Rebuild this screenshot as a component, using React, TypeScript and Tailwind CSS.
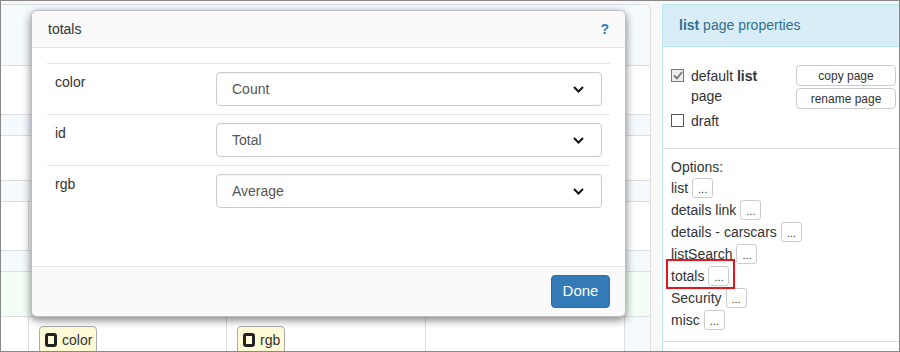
import React from "react";

const font = "font-['Liberation_Sans',Arial,sans-serif]";

function Chevron() {
  return (
    <svg width="11" height="7" viewBox="0 0 11 7" className="shrink-0">
      <polyline points="1,1 5.5,5.5 10,1" fill="none" stroke="#111" strokeWidth="2" />
    </svg>
  );
}

function FieldRow({ label, value }: { label: string; value: string }) {
  return (
    <div className="flex border-t border-[#e5e5e5] pt-[8px] pb-[8px]">
      <div className="w-[169px] pl-2 text-[14px] leading-[20px] text-[#333]">{label}</div>
      <div className="flex-1 mr-2 h-[34px] rounded-[4px] border border-[#ccc] bg-white flex items-center justify-between pl-[15px] pr-[17px] text-[14px] text-[#555] shadow-[inset_0_1px_1px_rgba(0,0,0,0.04)]">
        <span>{value}</span>
        <Chevron />
      </div>
    </div>
  );
}

function Chip({ label }: { label: string }) {
  return (
    <div className="inline-flex items-center gap-[5px] h-[28px] pl-[5px] pr-[4px] rounded-[4px] border border-[#aaa] bg-[#fffbd6] text-[14px] text-[#333]">
      <span className="w-[12px] h-[14px] rounded-[3px] border-[3px] border-[#222]" />
      {label}
    </div>
  );
}

function OptionLine({ label }: { label: string }) {
  return (
    <div className="flex items-center h-[22px] gap-[4px]">
      <span>{label}</span>
      <span className="w-[21px] h-[20px] rounded-[3px] border border-[#ccc] bg-white flex items-center justify-center text-[11px] leading-none text-[#333] pt-[2px]">
        ...
      </span>
    </div>
  );
}

export default function App() {
  const options = ["list", "details link", "details - carscars", "listSearch", "totals", "Security", "misc"];

  return (
    <div className={`relative w-[900px] h-[352px] overflow-hidden border border-[#888] bg-[#f8f8f8] ${font}`}>
      <div className="flex h-full pt-[3px]">
        {/* left page grid */}
        <div className="w-[650px] h-full flex flex-col bg-white border-t border-r border-[#ddd] rounded-tr-[6px] overflow-hidden">
          <div className="shrink-0 h-[61px] bg-[#f5faff] border-b border-[#ddd]" />
          <div className="shrink-0 h-[49px] border-b border-[#ddd]" />
          <div className="shrink-0 h-[21px] bg-[#f5faff] border-b border-[#ddd]" />
          <div className="shrink-0 h-[45px] border-b border-[#ddd]" />
          <div className="shrink-0 h-[21px] bg-[#f5faff] border-b border-[#ddd]" />
          <div className="shrink-0 h-[49px] border-b border-[#ddd] flex">
            <div className="w-[28px] border-r border-[#ddd]" />
          </div>
          <div className="shrink-0 h-[21px] bg-[#f5faff] border-b border-[#ddd]" />
          <div className="shrink-0 h-[45px] bg-[#f3fff6] border-b border-[#ddd]" />
          <div className="flex-1 min-h-0 flex">
            <div className="w-[28px] border-r border-[#ddd]" />
            <div className="w-[198px] border-r border-[#ddd] pl-[10px] pt-[9px]">
              <Chip label="color" />
            </div>
            <div className="w-[199px] border-r border-[#ddd] pl-[10px] pt-[9px]">
              <Chip label="rgb" />
            </div>
            <div className="w-[199px] border-r border-[#ddd]" />
            <div className="flex-1 bg-[#f5faff]" />
          </div>
        </div>

        <div className="w-[11px]" />

        {/* right properties panel */}
        <div className="flex-1 h-full bg-white border-t border-l border-[#bce8f1] text-[14px] text-[#333]">
          <div className="h-[42px] bg-[#d9edf7] border-b border-[#bce8f1] flex items-center pl-[16px] text-[14px] text-[#31708f]">
            <b>list</b>&nbsp;page properties
          </div>
          <div className="h-[102px] border-b border-[#ddd] flex pl-[8px] pt-[19px]">
            <div className="w-[125px] flex flex-col">
              <div className="flex items-start gap-[7px]">
                <span className="mt-[3px] w-[13px] h-[13px] border border-[#777] bg-[#eee] flex items-center justify-center">
                  <svg width="10" height="9" viewBox="0 0 10 9">
                    <polyline points="1,4.5 4,7.5 9,1" fill="none" stroke="#777" strokeWidth="1.8" />
                  </svg>
                </span>
                <span className="leading-[20px] w-[80px]">
                  default <b>list</b> page
                </span>
              </div>
              <div className="flex items-start gap-[7px] mt-[5px]">
                <span className="mt-[3px] w-[13px] h-[13px] border border-[#555] bg-white" />
                <span className="leading-[20px]">draft</span>
              </div>
            </div>
            <div className="flex flex-col gap-[2px] -mt-[1px]">
              <div className="w-[100px] h-[21px] rounded-[4px] border border-[#ccc] flex items-center justify-center text-[12px]">
                copy page
              </div>
              <div className="w-[100px] h-[21px] rounded-[4px] border border-[#ccc] flex items-center justify-center text-[12px]">
                rename page
              </div>
            </div>
          </div>
          <div className="relative pl-[8px] pt-[8px] pb-[10px] border-b border-[#ddd] leading-[22px]">
            <div className="h-[20px] leading-[20px]">Options:</div>
            {options.map((o) => (
              <OptionLine key={o} label={o} />
            ))}
            <div className="absolute left-[3px] top-[110px] w-[69px] h-[30px] border-2 border-[#e8141c]" />
          </div>
        </div>
      </div>

      {/* totals modal */}
      <div className="absolute left-[30px] top-[9px] w-[595px] h-[307px] rounded-[6px] border border-[rgba(0,0,0,0.25)] bg-white shadow-[0_3px_9px_rgba(0,0,0,0.5)] overflow-hidden flex flex-col">
        <div className="h-[37px] bg-[#fafafa] border-b border-[#e5e5e5] flex items-center justify-between pl-[16px] pr-[16px] text-[14px] text-[#333]">
          <span>totals</span>
          <span className="font-bold text-[#337ab7]">?</span>
        </div>
        <div className="flex-1 px-[15px] pt-[15px]">
          <FieldRow label="color" value="Count" />
          <FieldRow label="id" value="Total" />
          <FieldRow label="rgb" value="Average" />
        </div>
        <div className="h-[50px] bg-[#fafafa] border-t border-[#e5e5e5] flex items-center justify-end pr-[15px]">
          <div className="w-[59px] h-[33px] rounded-[4px] bg-[#337ab7] border border-[#2e6da4] text-white text-[15px] flex items-center justify-center">
            Done
          </div>
        </div>
      </div>
    </div>
  );
}
